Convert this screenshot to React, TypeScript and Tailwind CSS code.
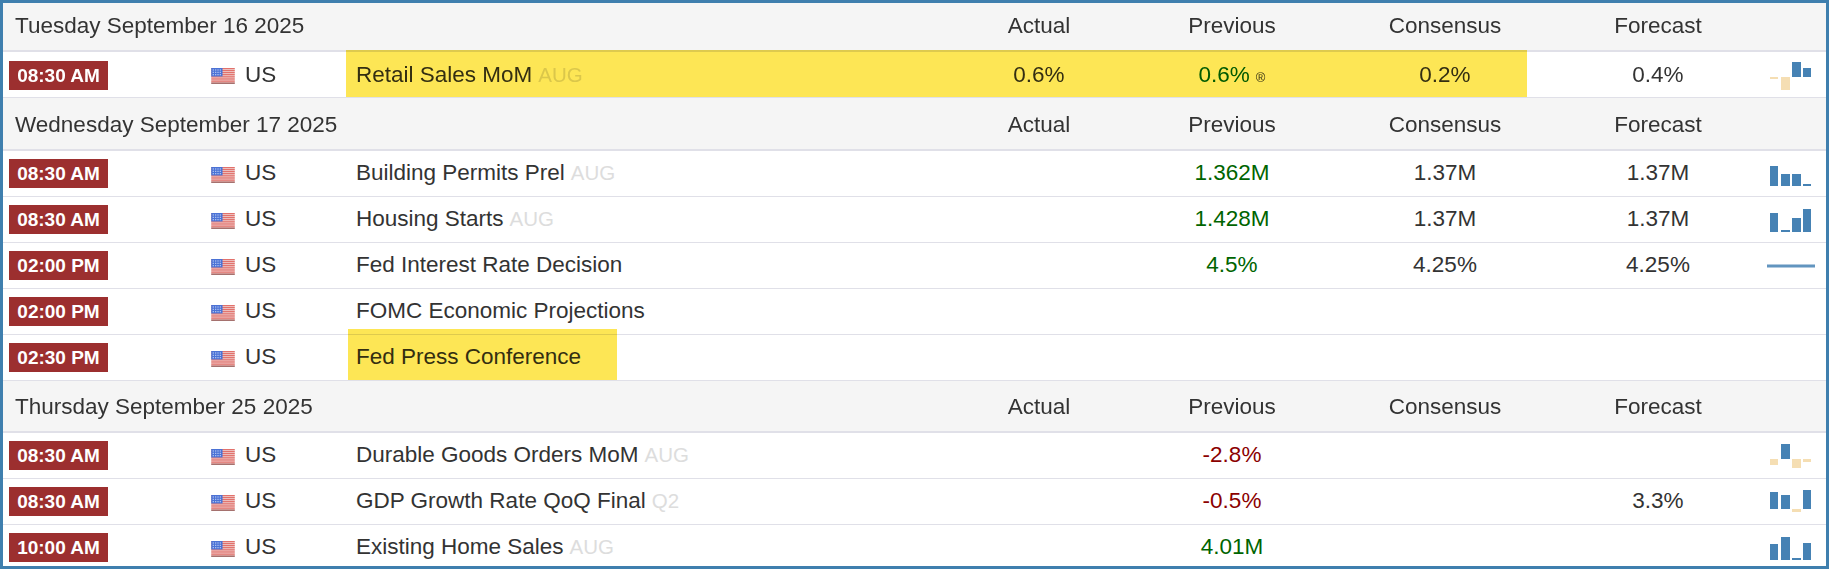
import React from 'react';

const BLUE = '#4682b4';
const TAN = '#f5deb3';

type Row = {
  time: string;
  event: string;
  period?: string;
  actual?: string;
  previous?: string;
  prevColor?: string;
  revised?: boolean;
  consensus?: string;
  forecast?: string;
  base?: number;
  bars?: number[];
  line?: boolean;
  h?: string;
};

type Group = { date: string; header: string; rowClass: string; rows: Row[] };

const GREEN = 'text-[#006400]';
const RED = 'text-[#8b0000]';

const groups: Group[] = [
  {
    date: 'Tuesday September 16 2025',
    header: 'h-[49px] pb-[2px]',
    rowClass: '',
    rows: [
      { time: '08:30 AM', event: 'Retail Sales MoM', period: 'AUG', actual: '0.6%', previous: '0.6%', prevColor: GREEN, revised: true, consensus: '0.2%', forecast: '0.4%', base: 24, bars: [-2, -13, 15, 9], h: 'left-[343px] w-[1181px] -top-[2px] bottom-0' },
    ],
  },
  {
    date: 'Wednesday September 17 2025',
    header: 'h-[53px] pt-[2px]',
    rowClass: 'pb-[2px]',
    rows: [
      { time: '08:30 AM', event: 'Building Permits Prel', period: 'AUG', previous: '1.362M', prevColor: GREEN, consensus: '1.37M', forecast: '1.37M', base: 35, bars: [20, 12, 12, 2] },
      { time: '08:30 AM', event: 'Housing Starts', period: 'AUG', previous: '1.428M', prevColor: GREEN, consensus: '1.37M', forecast: '1.37M', base: 35, bars: [19, 2, 14, 23] },
      { time: '02:00 PM', event: 'Fed Interest Rate Decision', previous: '4.5%', prevColor: GREEN, consensus: '4.25%', forecast: '4.25%', line: true },
      { time: '02:00 PM', event: 'FOMC Economic Projections' },
      { time: '02:30 PM', event: 'Fed Press Conference', h: 'left-[345px] w-[269px] -top-[6px] bottom-0' },
    ],
  },
  {
    date: 'Thursday September 25 2025',
    header: 'h-[52px] pt-[2px]',
    rowClass: 'pb-[2px]',
    rows: [
      { time: '08:30 AM', event: 'Durable Goods Orders MoM', period: 'AUG', previous: '-2.8%', prevColor: RED, base: 26, bars: [-6, 15, -9, -3] },
      { time: '08:30 AM', event: 'GDP Growth Rate QoQ Final', period: 'Q2', previous: '-0.5%', prevColor: RED, forecast: '3.3%', base: 30, bars: [17, 14, -3, 19] },
      { time: '10:00 AM', event: 'Existing Home Sales', period: 'AUG', previous: '4.01M', prevColor: GREEN, base: 35, bars: [16, 23, 2, 17] },
    ],
  },
];

const cols = 'grid grid-cols-[208px_135px_608px_170px_216px_210px_216px_60px] items-center';

const Flag = () => (
  <svg width="24" height="16" viewBox="0 0 25 17" className="block mt-[3px]">
    <rect width="25" height="17" fill="#f4f0f0" />
    {[0, 2, 4, 6, 8, 10, 12, 14].map((y) => (
      <rect key={y} y={y} width="25" height="1.4" fill="#e2716b" />
    ))}
    <rect y="15.5" width="25" height="1.5" fill="#a5716e" />
    <rect width="12" height="9" fill="#4a72d6" />
    {[1.5, 4, 6.5].map((y) =>
      [1.5, 4, 6.5, 9].map((x) => <rect key={`${x}-${y}`} x={x} y={y} width="1.4" height="1.2" fill="#b9c9f2" />),
    )}
  </svg>
);

const Spark = ({ base, bars, line }: { base?: number; bars?: number[]; line?: boolean }) => {
  const xs = [4, 15, 26, 37];
  const widths = [8, 9, 9, 8];
  return (
    <svg width="60" height="44" viewBox="0 0 60 44" className="block overflow-visible">
      {line && <rect x="1" y="21.5" width="48" height="3" fill={BLUE} opacity="0.85" />}
      {bars?.map((v, i) => (
        <rect
          key={i}
          x={xs[i]}
          y={v > 0 ? (base as number) - v : base}
          width={widths[i]}
          height={Math.abs(v)}
          fill={v > 0 ? BLUE : TAN}
        />
      ))}
    </svg>
  );
};

const DataRow = ({ row, className }: { row: Row; className: string }) => (
  <div className={`${cols} ${className} relative h-[46px] shrink-0 border-b border-[#e0e0e8] bg-white`}>
    {row.h && <div className={`absolute ${row.h} bg-[#fde655] mix-blend-multiply pointer-events-none`} />}
    <div className="pl-[6px]">
      <span className="inline-block w-[99px] h-[29px] bg-[#9c2f2f] text-white font-bold text-[19px] leading-[29px] text-center">
        {row.time}
      </span>
    </div>
    <div className="flex items-center gap-[10px]">
      <Flag />
      <span>US</span>
    </div>
    <div className="pl-[10px]">
      {row.event}
      {row.period && <span className="ml-[6px] text-[20.5px] text-[#dddddd]">{row.period}</span>}
    </div>
    <div className="text-center">{row.actual}</div>
    <div className={`text-center ${row.prevColor ?? ''}`}>
      {row.previous}
      {row.revised && <span className="ml-[6px] text-[13px] text-[#333333]">®</span>}
    </div>
    <div className="text-center">{row.consensus}</div>
    <div className="text-center">{row.forecast}</div>
    <Spark base={row.base} bars={row.bars} line={row.line} />
  </div>
);

export default function App() {
  return (
    <div className="h-[569px] overflow-hidden border-[3px] border-[#3f7fae] bg-white font-['Liberation_Sans',Arial,sans-serif] text-[22.5px] text-[#333333]">
      {groups.map((g) => (
        <div key={g.date}>
          <div className={`${cols} ${g.header} border-b-2 border-[#e0e0e8] bg-[#f5f5f5]`}>
            <div className="col-span-3 pl-[12px]">{g.date}</div>
            <div className="text-center">Actual</div>
            <div className="text-center">Previous</div>
            <div className="text-center">Consensus</div>
            <div className="text-center">Forecast</div>
          </div>
          {g.rows.map((r, i) => (
            <DataRow key={i} row={r} className={g.rowClass} />
          ))}
        </div>
      ))}
    </div>
  );
}
